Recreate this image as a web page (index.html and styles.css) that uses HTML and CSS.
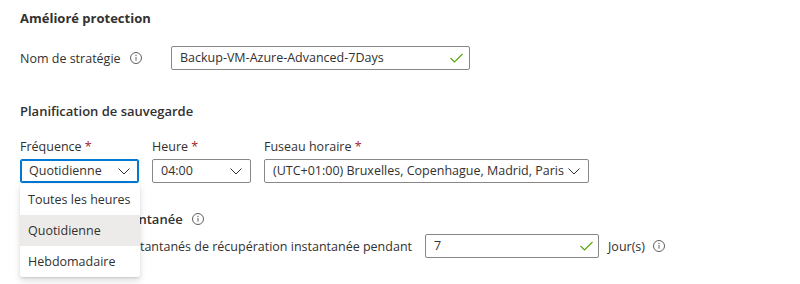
FILE: index.html
```html
<!DOCTYPE html>
<html lang="fr">
<head>
<meta charset="utf-8">
<title>Stratégie de sauvegarde</title>
<link rel="stylesheet" href="styles.css">
</head>
<body>
<div class="page">
  <h2 class="heading first">Amélioré protection</h2>

  <div class="row name-row">
    <div class="label-col">
      <span class="label">Nom de stratégie</span>
      <svg class="info" width="12" height="12" viewBox="0 0 12 12"><circle cx="6" cy="6" r="5.5" fill="none" stroke="#605e5c" stroke-width="1"/><rect x="5.5" y="5" width="1" height="3.6" fill="#605e5c"/><circle cx="6" cy="3.5" r="0.65" fill="#605e5c"/></svg>
    </div>
    <div class="field name-field">
      <span class="value">Backup-VM-Azure-Advanced-7Days</span>
      <svg class="check" width="13" height="10" viewBox="0 0 13 10"><polyline points="0.5,5 4.5,9 12.5,1" fill="none" stroke="#57a300" stroke-width="1.1"/></svg>
    </div>
  </div>

  <h2 class="heading second">Planification de sauvegarde</h2>

  <div class="row schedule-row">
    <div class="col freq-col">
      <div class="flabel">Fréquence <span class="req">*</span></div>
      <div class="field dropdown focused">
        <span class="value">Quotidienne</span>
        <svg class="chev" width="12" height="7" viewBox="0 0 12 7"><polyline points="0.5,0.5 6,6 11.5,0.5" fill="none" stroke="#323130" stroke-width="1"/></svg>
      </div>
      <div class="menu">
        <div class="item">Toutes les heures</div>
        <div class="item selected">Quotidienne</div>
        <div class="item">Hebdomadaire</div>
      </div>
    </div>
    <div class="col time-col">
      <div class="flabel">Heure <span class="req">*</span></div>
      <div class="field dropdown">
        <span class="value">04:00</span>
        <svg class="chev" width="12" height="7" viewBox="0 0 12 7"><polyline points="0.5,0.5 6,6 11.5,0.5" fill="none" stroke="#323130" stroke-width="1"/></svg>
      </div>
    </div>
    <div class="col tz-col">
      <div class="flabel">Fuseau horaire <span class="req">*</span></div>
      <div class="field dropdown">
        <span class="value">(UTC+01:00) Bruxelles, Copenhague, Madrid, Paris</span>
        <svg class="chev" width="12" height="7" viewBox="0 0 12 7"><polyline points="0.5,0.5 6,6 11.5,0.5" fill="none" stroke="#323130" stroke-width="1"/></svg>
      </div>
    </div>
  </div>

  <h2 class="heading third">Récupération instantanée
    <svg class="info" width="12" height="12" viewBox="0 0 12 12"><circle cx="6" cy="6" r="5.5" fill="none" stroke="#605e5c" stroke-width="1"/><rect x="5.5" y="5" width="1" height="3.6" fill="#605e5c"/><circle cx="6" cy="3.5" r="0.65" fill="#605e5c"/></svg>
  </h2>

  <div class="row retain-row">
    <div class="retain-label"><span>Conserver les instantanés de récupération instantanée pendant</span></div>
    <div class="field days-field">
      <span class="value">7</span>
      <svg class="check" width="13" height="10" viewBox="0 0 13 10"><polyline points="0.5,5 4.5,9 12.5,1" fill="none" stroke="#57a300" stroke-width="1.1"/></svg>
    </div>
    <span class="unit">Jour(s)</span>
    <svg class="info" width="12" height="12" viewBox="0 0 12 12"><circle cx="6" cy="6" r="5.5" fill="none" stroke="#605e5c" stroke-width="1"/><rect x="5.5" y="5" width="1" height="3.6" fill="#605e5c"/><circle cx="6" cy="3.5" r="0.65" fill="#605e5c"/></svg>
  </div>
</div>
</body>
</html>
```

FILE: styles.css
```css
html, body {
  margin: 0;
  padding: 0;
  background: #ffffff;
}

body {
  font-family: "Open Sans", "Noto Sans", sans-serif;
  font-size: 12.5px;
  color: #323130;
  width: 800px;
  height: 284px;
  overflow: hidden;
}

.page {
  padding-left: 20px;
  position: relative;
}

.heading {
  margin: 0;
  font-size: 13px;
  line-height: 20px;
  font-weight: 600;
  color: #323130;
  display: flex;
  align-items: center;
  gap: 9px;
}

.heading.first {
  padding-top: 8px;
  font-weight: 700;
}

.heading.second {
  margin-top: 31px;
}

.heading.third {
  margin-top: 26px;
}

.row {
  display: flex;
  align-items: center;
}

.name-row {
  margin-top: 18px;
}

.label-col {
  width: 151px;
  display: flex;
  align-items: center;
  gap: 9px;
}

.info {
  display: block;
  flex: none;
}

.field {
  box-sizing: border-box;
  height: 24px;
  border: 1px solid #8a8886;
  border-radius: 2px;
  background: #fff;
  display: flex;
  align-items: center;
  justify-content: space-between;
  padding: 0 8px;
  white-space: nowrap;
}

.field .value {
  line-height: 20px;
}

.name-field {
  width: 299px;
  padding-right: 6px;
}

.schedule-row {
  margin-top: 16px;
  align-items: flex-start;
  gap: 13px;
}

.col {
  display: flex;
  flex-direction: column;
  gap: 2px;
  position: relative;
}

.flabel {
  line-height: 20px;
}

.req {
  color: #a4262c;
}

.freq-col .field { width: 119px; }
.time-col .field { width: 99px; }
.tz-col .field { width: 325px; }

.dropdown .chev {
  display: block;
  flex: none;
}

.focused {
  border-color: #0078d4;
  box-shadow: inset 0 0 0 1px #0078d4;
}

.menu {
  position: absolute;
  top: 47px;
  left: 0;
  width: 120px;
  background: #fff;
  border-radius: 2px;
  box-shadow: 0 3.2px 7.2px rgba(0, 0, 0, 0.13), 0 0.6px 1.8px rgba(0, 0, 0, 0.11);
  z-index: 5;
}

.item {
  height: 31px;
  line-height: 31px;
  padding-left: 8px;
  white-space: nowrap;
}

.item.selected {
  background: #edebe9;
}

.retain-row {
  margin-top: 5px;
}

.retain-label {
  width: 392px;
  display: flex;
  justify-content: flex-end;
  white-space: nowrap;
  margin-right: 13px;
}

.days-field {
  width: 174px;
  padding-right: 5px;
}

.unit {
  margin-left: 9px;
  margin-right: 8px;
}
```
